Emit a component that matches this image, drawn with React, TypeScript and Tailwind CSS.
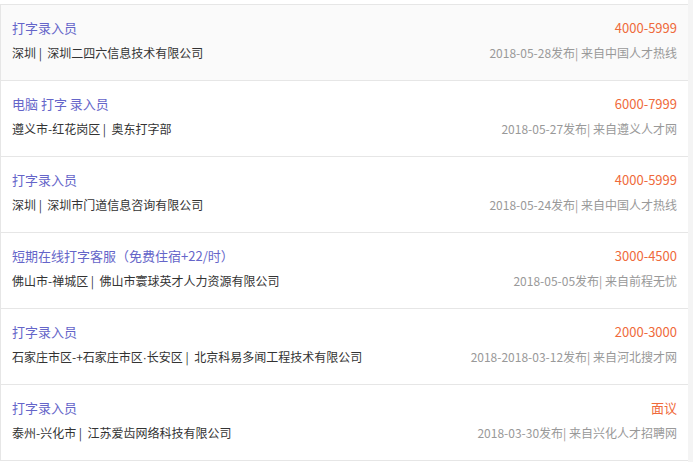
import React from 'react';

interface Job {
  title: string;
  place: React.ReactNode;
  company: string;
  salary: string;
  date: string;
  source: string;
}

const jobs: Job[] = [
  { title: '打字录入员', place: '深圳', company: '深圳二四六信息技术有限公司', salary: '4000-5999', date: '2018-05-28', source: '中国人才热线' },
  { title: '电脑 打字 录入员', place: '遵义市-红花岗区', company: '奥东打字部', salary: '6000-7999', date: '2018-05-27', source: '遵义人才网' },
  { title: '打字录入员', place: '深圳', company: '深圳市门道信息咨询有限公司', salary: '4000-5999', date: '2018-05-24', source: '中国人才热线' },
  { title: '短期在线打字客服（免费住宿+22/时）', place: '佛山市-禅城区', company: '佛山市寰球英才人力资源有限公司', salary: '3000-4500', date: '2018-05-05', source: '前程无忧' },
  {
    title: '打字录入员',
    place: (
      <>
        石家庄市区-+石家庄市区<span style={{ fontFamily: '"Liberation Sans", sans-serif' }}>·</span>长安区
      </>
    ),
    company: '北京科易多闻工程技术有限公司',
    salary: '2000-3000',
    date: '2018-2018-03-12',
    source: '河北搜才网',
  },
  { title: '打字录入员', place: '泰州-兴化市', company: '江苏爱齿网络科技有限公司', salary: '面议', date: '2018-03-30', source: '兴化人才招聘网' },
];

export default function App() {
  return (
    <div
      className="w-[693px] h-[462px] overflow-hidden bg-[#f4f4f4] flex"
      style={{ fontFamily: '"Microsoft YaHei", "Noto Sans CJK SC", sans-serif' }}
    >
      <div className="w-[688px] h-full bg-white pt-[4px]">
        <ul className="border-t border-l border-[#e6e6e6]">
          {jobs.map((job, i) => (
            <li
              key={i}
              className={`h-[76px] border-b border-[#e6e6e6] flex justify-between pl-[11px] pr-[11px] pt-[14px] ${i === 0 ? 'bg-[#fafafa]' : 'bg-white'}`}
            >
              <div className="flex flex-col">
                <span className="text-[13px] leading-[18px] text-[#6565c9]">{job.title}</span>
                <span className="text-[12px] leading-[18px] mt-[7px] text-[#333]">
                  {job.place} |&nbsp; {job.company}
                </span>
              </div>
              <div className="flex flex-col items-end">
                <span className="text-[13px] leading-[18px] text-[#ef6a3b]">{job.salary}</span>
                <span className="text-[12px] leading-[18px] mt-[7px] text-[#999]">
                  {job.date}发布| 来自{job.source}
                </span>
              </div>
            </li>
          ))}
        </ul>
      </div>
    </div>
  );
}
